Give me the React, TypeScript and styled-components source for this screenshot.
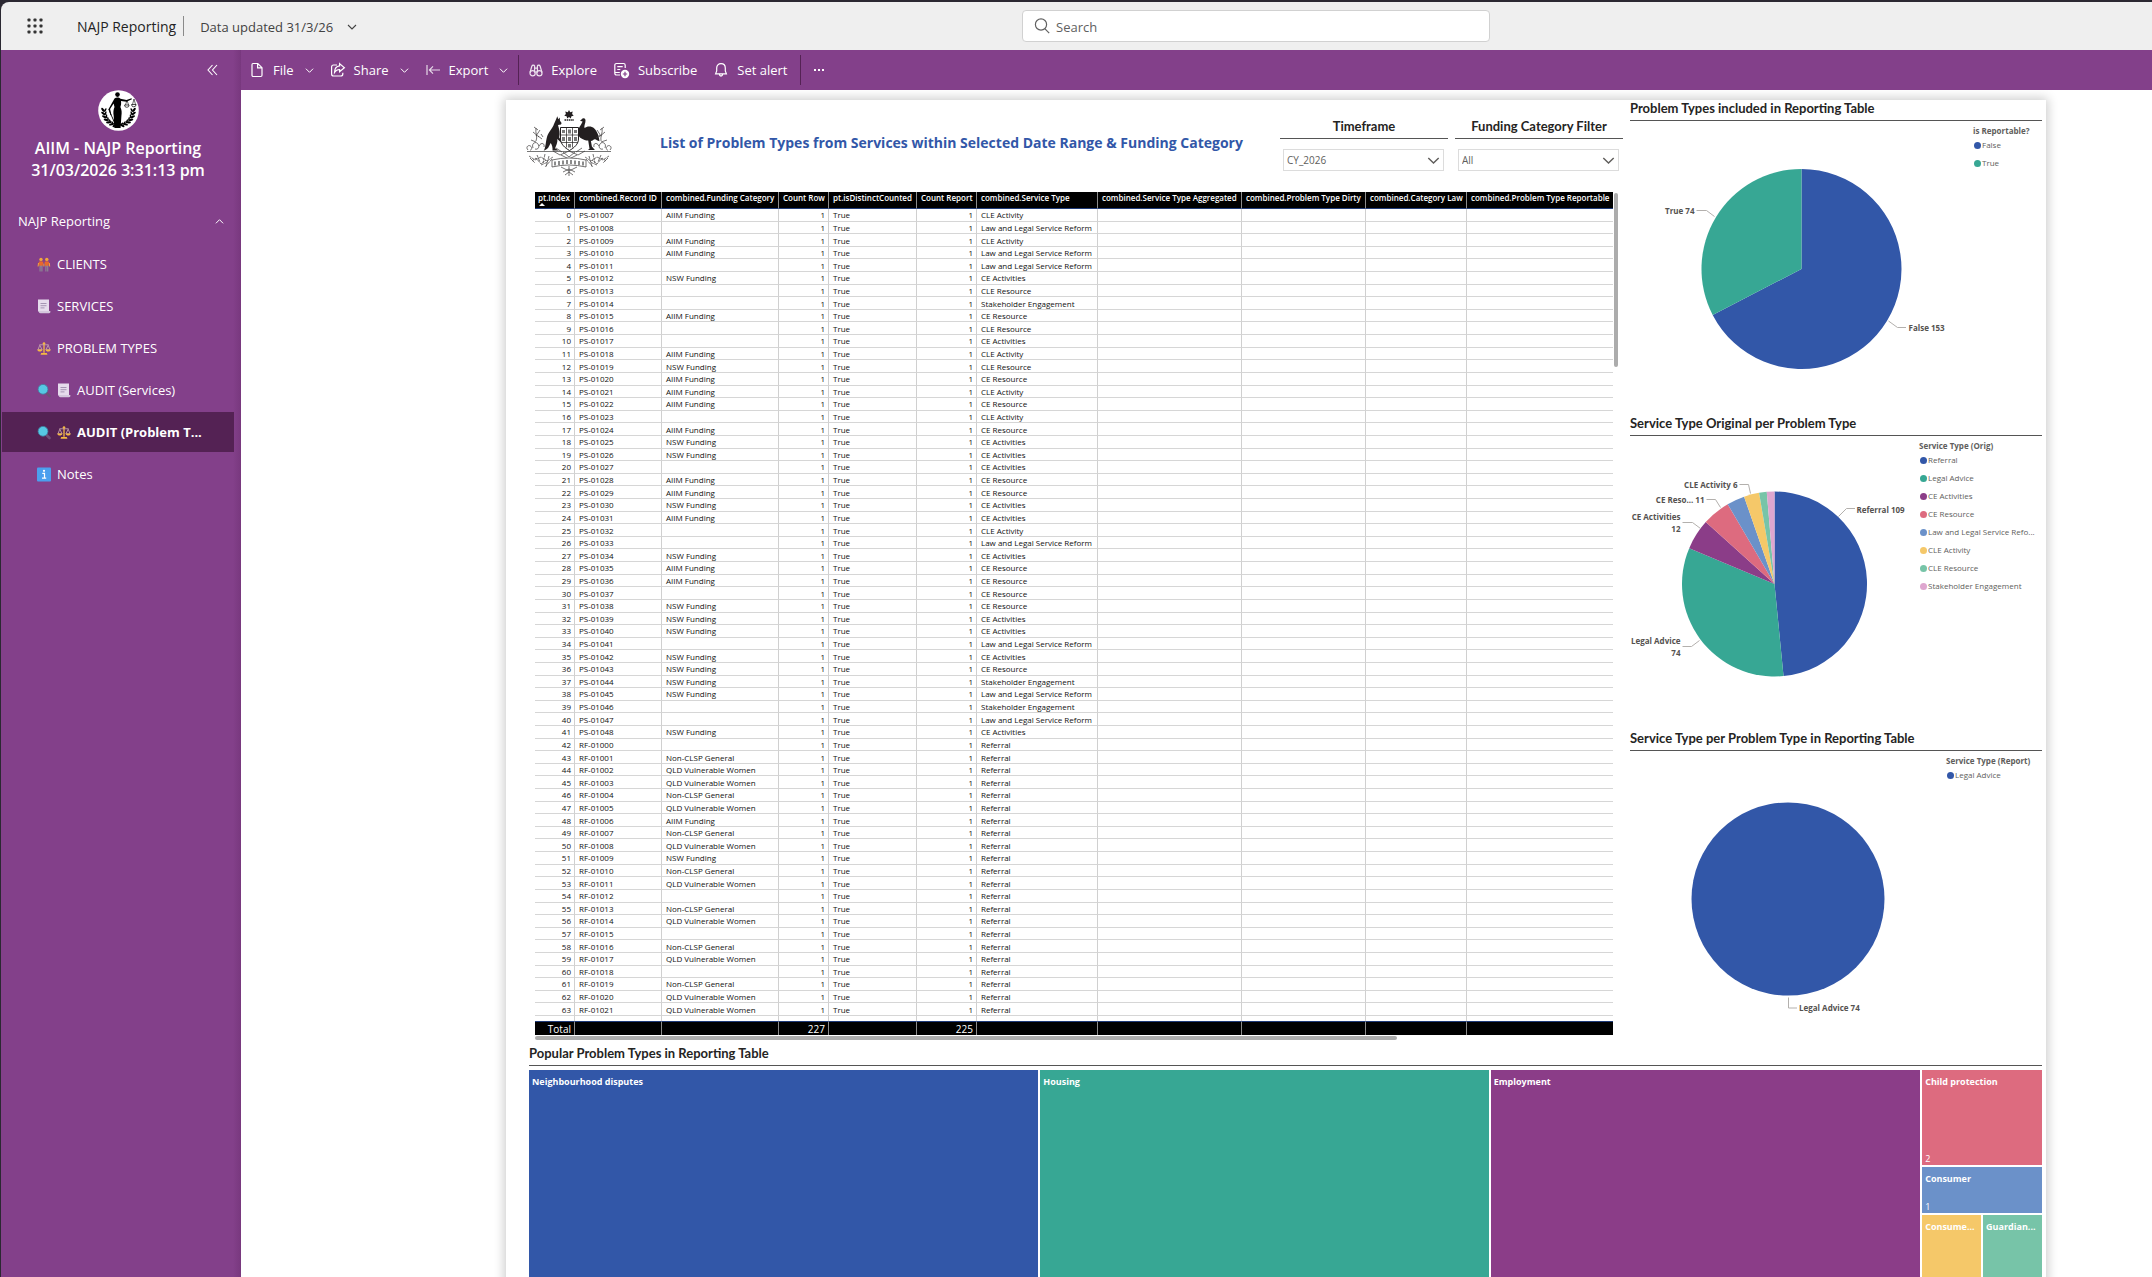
import React from 'react';
import styled, { createGlobalStyle } from 'styled-components';

const palette = {
  blue: '#3257a8',
  green: '#37a794',
  purple: '#8b3d88',
  coral: '#dd6b7f',
  sky: '#6b91c9',
  yellow: '#f5c869',
  mint: '#77c4a8',
  pink: '#dea6cf',
  brand: '#83408a',
  brandDark: '#542254',
};

const uiFont = `'Open Sans', 'Noto Sans', sans-serif`;
const reportFont = `Lato, 'Open Sans', sans-serif`;

const GlobalStyle = createGlobalStyle`
  *, *::before, *::after { box-sizing: border-box; }
  html, body, #root { height: 100%; }
  body { margin: 0; overflow: hidden; background: #2b2832; font-family: ${uiFont}; color: #252423; }
  button, input, select { font: inherit; color: inherit; }
  h1, h2, h3, p, ul, dl, dd { margin: 0; padding: 0; }
  ul { list-style: none; }
  a { color: inherit; text-decoration: none; }
`;

/* ---------- shell ---------- */

const Shell = styled.div`
  height: 100%;
  padding: 2px 0 0 1px;
  display: flex;
  flex-direction: column;
`;

const TopBar = styled.header`
  flex: none;
  height: 48px;
  display: grid;
  grid-template-columns: 1fr 468px minmax(0, 662px);
  align-items: center;
  background: #efefef;
  border-top-left-radius: 8px;
`;

const TopLeft = styled.div`
  display: flex;
  align-items: center;
  padding-left: 18px;
`;

const PlainButton = styled.button`
  display: inline-flex;
  align-items: center;
  padding: 0;
  border: 0;
  background: none;
  cursor: pointer;
`;

const LauncherButton = styled(PlainButton)`
  width: 32px;
  height: 32px;
  justify-content: center;
  color: #333;
`;

const Workspace = styled.a`
  margin-left: 26px;
  padding-top: 2px;
  font-size: 14px;
  line-height: 20px;
  color: #242424;
  white-space: nowrap;
`;

const TopDivider = styled.span`
  width: 1px;
  height: 20px;
  margin: 0 16px 0 7px;
  background: #8a8a8a;
`;

const UpdatedButton = styled(PlainButton)`
  gap: 14px;
  padding-top: 2px;
  font-size: 13px;
  line-height: 20px;
  color: #424242;
  white-space: nowrap;
`;

const SearchBox = styled.label`
  display: flex;
  align-items: center;
  gap: 6px;
  height: 32px;
  padding: 0 11px;
  border: 1px solid #d1d1d1;
  border-radius: 4px;
  background: #fff;
  color: #616161;
`;

const SearchInput = styled.input`
  flex: 1;
  min-width: 0;
  border: 0;
  padding: 2px 0 0;
  outline: 0;
  background: none;
  font-size: 13px;
  line-height: 20px;
  &::placeholder { color: #616161; opacity: 1; }
`;

const Body = styled.div`
  flex: 1;
  min-height: 0;
  display: flex;
`;

/* ---------- sidebar ---------- */

const Sidebar = styled.aside`
  flex: none;
  width: 240px;
  padding: 12px 7px 0 1px;
  display: flex;
  flex-direction: column;
  background: linear-gradient(90deg, ${palette.brand} 232px, #78387e 240px);
  color: #fff;
`;

const CollapseButton = styled(PlainButton)`
  align-self: flex-end;
  width: 32px;
  height: 16px;
  margin-right: 6px;
  justify-content: center;
`;

const AppHead = styled.div`
  display: flex;
  flex-direction: column;
  align-items: center;
  padding-top: 12px;
  padding-bottom: 30px;
`;

const AppName = styled.h1`
  margin-top: 6px;
  font-size: 16px;
  font-weight: 600;
  line-height: 22px;
  text-align: center;
`;

const SectionButton = styled(PlainButton)`
  justify-content: space-between;
  height: 20px;
  padding: 0 10px 0 16px;
  font-size: 13px;
  line-height: 20px;
`;

const NavList = styled.ul`
  display: flex;
  flex-direction: column;
  gap: 2px;
  padding-top: 13px;
`;

const NavLink = styled.a<{ $active?: boolean }>`
  display: flex;
  align-items: center;
  gap: 6px;
  height: 40px;
  padding: 0 28px 0 35px;
  font-size: 13px;
  font-weight: ${(p) => (p.$active ? 700 : 400)};
  line-height: 20px;
  white-space: nowrap;
  background: ${(p) => (p.$active ? palette.brandDark : 'transparent')};
`;

const NavText = styled.span``;

/* ---------- toolbar ---------- */

const MainColumn = styled.div`
  flex: 1;
  min-width: 0;
  display: flex;
  flex-direction: column;
`;

const Toolbar = styled.div`
  flex: none;
  display: flex;
  align-items: center;
  gap: 16px;
  height: 40px;
  padding-left: 8px;
  background: ${palette.brand};
  color: #fff;
`;

const ToolButton = styled(PlainButton)`
  gap: 8px;
  height: 32px;
  font-size: 13px;
  line-height: 20px;
  white-space: nowrap;
  & > svg:last-child:not(:first-child) { margin-left: 3px; }
`;

const ToolDivider = styled.span<{ $tight?: boolean }>`
  width: 1px;
  height: 30px;
  margin: 0 ${(p) => (p.$tight ? -6 : -4)}px;
  background: #542254;
`;

/* ---------- report page ---------- */

const Stage = styled.main`
  flex: 1;
  min-height: 0;
  overflow: hidden;
  padding: 10px 106px 0 265px;
  background: #fff;
`;

const ReportPage = styled.article`
  min-height: 1400px;
  padding: 1px 4px 0 20px;
  background: #fff;
  box-shadow: 0 0 10px 2px rgba(0, 0, 0, 0.2);
  font-family: ${reportFont};
`;

const UpperGrid = styled.div`
  display: grid;
  grid-template-columns: minmax(0, 1fr) 412px;
  gap: 7px;
  height: 942px;
`;

const LeftColumn = styled.section`
  display: flex;
  flex-direction: column;
  min-width: 0;
`;

const ReportHead = styled.div`
  display: flex;
  align-items: flex-start;
  height: 91px;
`;

const CrestBox = styled.div`
  width: 88px;
  padding-top: 9px;
`;

const ReportTitle = styled.h2`
  flex: 1;
  padding: 31px 0 0 46px;
  font-family: ${uiFont};
  font-size: 14px;
  font-weight: 700;
  line-height: 22px;
  color: ${palette.blue};
  white-space: nowrap;
`;

const Slicers = styled.div`
  display: flex;
  gap: 7px;
  padding-top: 14px;
`;

const Slicer = styled.label`
  display: flex;
  flex-direction: column;
  width: 168px;
`;

const SlicerTitle = styled.span`
  height: 24px;
  font-size: 13px;
  font-weight: 700;
  line-height: 22px;
  text-align: center;
  border-bottom: 1px solid #555;
`;

const SelectWrap = styled.span`
  position: relative;
  display: block;
  margin: 10px 4px 0 3px;
  color: #605e5c;
`;

const SlicerSelect = styled.select`
  display: block;
  width: 100%;
  height: 22px;
  padding: 0 24px 0 3px;
  appearance: none;
  border: 1px solid #dcdcdc;
  border-radius: 0;
  background: #fff;
  font-family: ${uiFont};
  font-size: 10px;
  line-height: 20px;
`;

const SelectChevron = styled.span`
  position: absolute;
  right: 4px;
  top: 0;
  height: 22px;
  display: flex;
  align-items: center;
  pointer-events: none;
`;

/* ---------- data table ---------- */

const TableBlock = styled.div`
  display: grid;
  grid-template-columns: minmax(0, 1fr) 6px;
  row-gap: 1px;
  padding: 0 4px 0 9px;
`;

const TableArea = styled.div`
  min-width: 0;
  font-family: ${uiFont};
  font-size: 8px;
  line-height: 11px;
`;

const TableClip = styled.div`
  height: 829px;
  overflow: hidden;
`;

const DataTable = styled.table<{ $height: number }>`
  width: 100%;
  height: ${(p) => p.$height}px;
  table-layout: fixed;
  border-collapse: separate;
  border-spacing: 0;
`;

const HeadCell = styled.th`
  height: 17px;
  padding: 0 0 4px 4px;
  background: #000;
  color: #fff;
  border-right: 1px solid #8c8c8c;
  border-bottom: 1px solid #1e3a78;
  font-weight: 600;
  text-align: left;
  vertical-align: top;
  white-space: nowrap;
  &:first-child { padding-left: 3px; }
  &:last-child { border-right: 0; }
`;

const SortMark = styled.span`
  position: absolute;
  display: block;
  margin-left: 1px;
  border: 3px solid transparent;
  border-top: 0;
  border-bottom-color: #fff;
`;

const Cell = styled.td<{ $num?: boolean }>`
  padding: 0 3px 0 4px;
  color: #111;
  font-weight: 500;
  border-right: 1px solid #d0d0d0;
  border-bottom: 1px solid #d6d6d6;
  text-align: ${(p) => (p.$num ? 'right' : 'left')};
  white-space: nowrap;
  &:last-child { border-right: 0; }
`;

const TotalCell = styled.td`
  height: 14px;
  padding: 0 3px 0 4px;
  background: #000;
  color: #fff;
  border-right: 1px solid #8c8c8c;
  border-top: 1px solid #1e3a78;
  font-size: 10px;
  line-height: 12px;
  text-align: right;
  &:last-child { border-right: 0; }
`;

const VerticalTrack = styled.div`
  padding: 1px 0 0 1px;
  &::before { content: ''; display: block; width: 4px; height: 174px; border-radius: 2px; background: #acacac; }
`;

const HorizontalTrack = styled.div`
  grid-column: 1;
  &::before { content: ''; display: block; width: 80%; height: 4px; border-radius: 2px; background: #acacac; }
`;

/* ---------- charts ---------- */

const RightColumn = styled.section`
  display: flex;
  flex-direction: column;
`;

const ChartPanel = styled.section`
  height: 315px;
`;

const PanelTitle = styled.h3`
  height: 20px;
  font-size: 13px;
  font-weight: 700;
  line-height: 14px;
  border-bottom: 1px solid #555;
  white-space: nowrap;
`;

const ChartRow = styled.div`
  display: flex;
`;

const ChartSvg = styled.svg`
  flex: 1;
  min-width: 0;
  height: 296px;
  overflow: visible;
`;

const Legend = styled.div<{ $width: number }>`
  width: ${(p) => p.$width}px;
  padding-top: 4px;
  font-family: ${uiFont};
  font-size: 8px;
  line-height: 12px;
  color: #605e5c;
`;

const LegendTitle = styled.p`
  font-weight: 700;
`;

const LegendList = styled.ul`
  display: flex;
  flex-direction: column;
  gap: 6px;
  padding: 2px 0 0 1px;
  font-weight: 500;
`;

const LegendItem = styled.li`
  display: flex;
  align-items: center;
  gap: 1px;
  white-space: nowrap;
`;

const Dot = styled.i<{ $color: string }>`
  width: 7px;
  height: 7px;
  border-radius: 50%;
  background: ${(p) => p.$color};
`;

/* ---------- treemap ---------- */

const TreeTitle = styled(PanelTitle)`
  height: 23px;
  line-height: 20px;
`;

const TreeSection = styled.section`
  padding-left: 3px;
`;

const TreeMap = styled.ul`
  display: grid;
  grid-template-columns: 510fr 449fr 430fr 59fr 59fr;
  grid-template-rows: 95px 46px 125px;
  gap: 2px;
  margin-top: 4px;
  color: #fff;
  font-family: ${uiFont};
`;

const Tile = styled.li<{ $color: string; $area: string }>`
  grid-area: ${(p) => p.$area};
  display: flex;
  flex-direction: column;
  justify-content: space-between;
  min-width: 0;
  padding: 5px 0 0 3px;
  background: ${(p) => p.$color};
  font-size: 9px;
  line-height: 13px;
`;

const TileName = styled.strong`
  overflow: hidden;
  white-space: nowrap;
`;

/* ---------- icons ---------- */

const Chevron = ({ size = 9, up = false }: { size?: number; up?: boolean }) => (
  <svg width={size} height={size} viewBox="0 0 10 10" fill="none" stroke="currentColor" strokeWidth="1.1" aria-hidden="true">
    <path d={up ? 'M1 7l4-4 4 4' : 'M1 3l4 4 4-4'} />
  </svg>
);

const WaffleIcon = () => (
  <svg width="16" height="16" viewBox="0 0 16 16" fill="currentColor" aria-hidden="true">
    {[1, 7, 13].map((y) => [1, 7, 13].map((x) => <rect key={`${x}-${y}`} x={x - 0.5} y={y - 0.5} width="3" height="3" rx="0.8" />))}
  </svg>
);

const SearchIcon = () => (
  <svg width="16" height="16" viewBox="0 0 16 16" fill="none" stroke="currentColor" strokeWidth="1.2" aria-hidden="true">
    <circle cx="7" cy="6.5" r="5.6" />
    <path d="M11 10.8l4.2 4.4" />
  </svg>
);

const CollapseIcon = () => (
  <svg width="11" height="12" viewBox="0 0 11 12" fill="none" stroke="currentColor" strokeWidth="1.1" aria-hidden="true">
    <path d="M5.5 1L1 6l4.5 5M10 1L5.5 6l4.5 5" />
  </svg>
);

const toolIcon = { fill: 'none', stroke: 'currentColor', strokeWidth: 1.2, 'aria-hidden': true } as const;

const FileIcon = () => (
  <svg width="16" height="16" viewBox="0 0 16 16" {...toolIcon}>
    <path d="M4 1.5h4.8L13 5.7v7.6c0 .7-.5 1.2-1.2 1.2H4.2c-.7 0-1.2-.5-1.2-1.2V2.7c0-.7.5-1.2 1-1.2zM8.6 1.6v4.2H13" />
  </svg>
);

const ShareIcon = () => (
  <svg width="16" height="16" viewBox="0 0 16 16" {...toolIcon}>
    <path d="M7 3H3.6C2.4 3 1.6 3.8 1.6 5v7c0 1.2.8 2 2 2h7.2c1.2 0 2-.8 2-2v-1.2" />
    <path d="M9.6 1.6L14.4 5.7 9.6 9.8V7.5C7.3 7.5 5.7 8.4 4.5 10.4 4.6 6.8 6.5 4.2 9.6 3.9z" />
  </svg>
);

const ExportIcon = () => (
  <svg width="16" height="16" viewBox="0 0 16 16" {...toolIcon} opacity="0.8">
    <path d="M2 3v10M15 8H4.5M8 4.4L4.4 8 8 11.6" />
  </svg>
);

const ExploreIcon = () => (
  <svg width="14" height="16" viewBox="1 0 14 16" {...toolIcon} opacity="0.85">
    <circle cx="4.6" cy="11.2" r="2.6" />
    <circle cx="11.4" cy="11.2" r="2.6" />
    <path d="M2 10.5L3.9 4c.3-1.2 2.4-1.2 2.7 0V10.5M14 10.5L12.100 4c-.3-1.200-2.400-1.200-2.700 0V10.500M6.600 6.200h2.800M7.200 10h1.600" />
  </svg>
);

const SubscribeIcon = () => (
  <svg width="17" height="17" viewBox="0 0 17 17" {...toolIcon}>
    <path d="M7 13H3.5c-1 0-1.7-.7-1.7-1.7V3.2c0-1 .7-1.7 1.7-1.7h7c1 0 1.7.7 1.7 1.7V6M4.3 4.6h5.4M4.3 7.5h3M1.8 10.5h5" />
    <circle cx="12" cy="12" r="4.2" fill="#fff" stroke="none" />
    <path d="M12 9.8v4.4M9.8 12h4.4" stroke={palette.brand} />
  </svg>
);

const BellIcon = () => (
  <svg width="16" height="16" viewBox="0 0 16 16" {...toolIcon}>
    <path d="M8 1.6c-2.6 0-4.3 1.9-4.3 4.4v3L2.6 11.8h10.8L12.3 9V6c0-2.5-1.7-4.4-4.3-4.4zM6.3 12.2c.2 1.3.9 1.9 1.7 1.9s1.5-.6 1.7-1.9" />
  </svg>
);

const MoreIcon = () => (
  <svg width="14" height="4" viewBox="0 0 14 4" fill="currentColor" aria-hidden="true">
    <rect x="1" y="1" width="2" height="2" /><rect x="5" y="1" width="2" height="2" /><rect x="9" y="1" width="2" height="2" />
  </svg>
);

const ClientsIcon = () => (
  <svg width="14" height="15" viewBox="0 0 14 15" aria-hidden="true">
    {[4, 9.8].map((x) => (
      <g key={x}>
        <path d={`M${x - 1.5} 8h3v6.500h-1.200v-5h-.6v5h-1.200z`} fill="#8d8594" />
        <path d={`M${x - 2.3} 4.800q2.300-1.200 4.600 0l-.6 4h-3.400z`} fill="#e8672c" />
        <circle cx={x} cy="2.400" r="1.700" fill="#f2a83c" />
      </g>
    ))}
    <path d="M1.500 6l-.4 3.500M12.300 6l.4 3.500M6.900 6.500v3" stroke="#f2a83c" />
  </svg>
);

const PageIcon = () => (
  <svg width="14" height="15" viewBox="0 0 14 15" aria-hidden="true">
    <path d="M1 .5h11v12.500H2.500L1 12z" fill="#e6dcec" />
    <path d="M2.500 12h10.800c.3 1.300-.3 2.300-1.300 2.300H3.500C2 14 1.500 13 1.300 11.500z" fill="#d4c8dd" />
    <path d="M3.500 4.500h6M3.500 6.700h6M3.500 8.900h4" stroke="#a595b3" strokeWidth="1" />
  </svg>
);

const ScalesIcon = () => (
  <svg width="14" height="15" viewBox="0 0 15 15" fill="none" aria-hidden="true">
    <path d="M7.500 2v10" stroke="#f5b942" strokeWidth="1.400" />
    <path d="M2.500 3.500h10M3 4L1 9h4.500zM12 4l-2.500 5H14z" stroke="#c9a7b0" strokeWidth=".9" />
    <path d="M.3 8.500h5.400c-.2 1.500-1.200 2.300-2.700 2.300S.5 10 .3 8.500zM9.300 8.500h5.400c-.2 1.500-1.200 2.300-2.700 2.300S9.500 10 9.300 8.500zM4.500 12.300h6l.7 2H3.800z" fill="#f5b942" />
    <circle cx="7.500" cy="2" r="1.300" fill="#f5b942" />
  </svg>
);

const LensIcon = () => (
  <svg width="14" height="15" viewBox="0 0 14 15" fill="none" aria-hidden="true">
    <path d="M9.500 10l3 3" stroke="#6e5078" strokeWidth="2.600" strokeLinecap="round" />
    <circle cx="6" cy="6.300" r="4.900" fill="#56c8e4" stroke="#3f7fa0" strokeWidth=".8" />
  </svg>
);

const InfoIcon = () => (
  <svg width="14" height="15" viewBox="0 0 14 15" aria-hidden="true">
    <rect y=".5" width="14" height="14" rx="1" fill="#4b9fee" />
    <circle cx="7" cy="3.800" r="1.100" fill="#fff" />
    <path d="M5.300 6.300h2.200v5M5 11.200h4.200" stroke="#fff" strokeWidth="1.200" fill="none" />
  </svg>
);

const leaves = [0, 1, 2, 3, 4, 5, 6];

const JusticeLogo = () => (
  <svg width="41" height="41" viewBox="0 0 41 41" role="img" aria-label="AIIM">
    <circle cx="20.500" cy="20.500" r="20.300" fill="#fff" />
    <g fill="#000">
      <circle cx="19.500" cy="4.600" r="2.300" />
      <path d="M16.500 8.500c1.500-1.300 4.600-1.300 6 .2l6 1.200 5-1.600.4 1-5.400 2.400-5.500-.6c.3 2.600.1 4.200-.6 5.800 1.400 3 1.500 5.600 1 9l-.8 12h-6.200l-.7-12c-.6-3.300-.3-6 .8-8.800l-.9-3.600-3.500 5.600 1.300 6-.9.2-1.900-6.300z" />
      <path d="M11 19l7.500 17-.8.4L10.300 19.300z" />
    </g>
    <path d="M29 10l-1.500 5M29 10l1.500 5M36 9l-1.500 5.500M36 9l1.500 5.500" stroke="#000" strokeWidth=".6" fill="none" />
    <path d="M26.500 15a2.300 2.300 0 004.600 0zM33.500 14.500a2.300 2.300 0 004.600 0z" fill="none" stroke="#000" strokeWidth=".7" />
    {leaves.map((i) => {
      const a = ((182 - i * 13) * Math.PI) / 180;
      const x = 15.5 * Math.cos(a);
      const y = 15.5 * Math.sin(a);
      return (
        <g key={i}>
          <ellipse cx={20.5 + x} cy={20.5 + y} rx="2.500" ry="1.100" transform={`rotate(${50 - i * 13} ${20.5 + x} ${20.5 + y})`} />
          <ellipse cx={20.5 + x * 0.85} cy={20.5 + y * 0.9} rx="2" ry=".8" transform={`rotate(${120 - i * 13} ${20.5 + x * 0.85} ${20.5 + y * 0.9})`} />
          <ellipse cx={20.5 - x} cy={20.5 + y} rx="2.500" ry="1.100" transform={`rotate(${-50 + i * 13} ${20.5 - x} ${20.5 + y})`} />
          <ellipse cx={20.5 - x * 0.85} cy={20.5 + y * 0.9} rx="2" ry=".8" transform={`rotate(${-120 + i * 13} ${20.5 - x * 0.85} ${20.5 + y * 0.9})`} />
        </g>
      );
    })}
  </svg>
);

const Crest = () => (
  <svg width="86" height="66" viewBox="1 0 86 66" role="img" aria-label="Australian coat of arms">
    <path d="M44 0l1.200 2.200 2.500-.6-.6 2.400 1.600 1.700-2.300.6-.6 2.300-1.800-1.500-1.800 1.500-.6-2.300-2.300-.6 1.600-1.700-.6-2.400 2.500.6z" fill="#231f20" />
    <path d="M39.500 10h9.500" stroke="#231f20" strokeWidth="1.600" strokeDasharray="1.600 .6" />
    <g fill="#231f20">
      <path d="M31 9.500l1.300-3.300 1 3 1.400-1.700.3 3.200 1.600 2.400-.6 1.300-3 .5c1.300 4.200 2.300 8.300 1.200 12.500l2.200 3.300-.6 1.500-3.500-3.300c.6 3.600-1.300 6.500-2.200 9.300l3.700 2.300H27.500c.3-3.300-.6-5.500-1.800-7.500-2 3.600-2.200 6.200-7 7.700 2.200-3.300 1.900-9.300 3.500-14.500 1.300-4.400 5.300-7.500 6.800-12.300z" />
      <path d="M56.500 9.500c1.300-1.800 3.600-1.500 4 .6.3 3-1.800 5.600-1 8 2.500-2 7-2.200 9.800.4 3.300 3 4.600 8.400 5.200 12.800-2-.3-3.300-1.800-4.600-2-1.600.2-2.300 1.600-4 1.600l1 5.600 3 3.600h-7l1.600-1.300-1.300-8.200c-5-.6-9.300-2.600-10.400-7.200-1-4.600 3.600-8.400 4.800-12l-2.600-.6z" />
    </g>
    <path d="M35.500 17.500h18V29c0 5-4.500 9-9 11.500-4.500-2.500-9-6.500-9-11.500z" fill="#fff" stroke="#231f20" strokeWidth="1" />
    <path d="M35.500 25h18M41.500 17.500v20M47.500 17.500v20M36 32.500h17" stroke="#231f20" strokeWidth=".7" />
    <path d="M37 20h3v3h-3zM43 19.500h3v4h-3zM49 20h3v3h-3zM37 27h3v4h-3zM43 27h3v4h-3zM49 27h3v4h-3zM43 34h3v3.500h-3z" fill="#777" />
    <g fill="none" stroke="#3a3637" strokeWidth=".7">
      <path d="M2 41.500h84" strokeWidth="1.200" stroke="#777" />
      <path d="M3 40c-3-3 1-6 3-3.500s-1 4-1 4M8 38c-2-5 3-7 5-4s0 6-3 5M14 36c2-4 6-3 5 1M11 31c2-4-1-8 0-13M8 22l6 5M15 20l-4 6M17 29l-4-3M9 17l4 3M16 24l2 3M6 30l5 2" />
      <path d="M85 40c3-3-1-6-3-3.500s1 4 1 4M80 38c2-5-3-7-5-4s0 6 3 5M74 36c-2-4-6-3-5 1M76 31c-1-4 2-8 1-13M80 22l-6 5M72 20l4 6M71 28l4-3M79 17l-4 3M82 30l-6 2" />
      <path d="M28 41l7 4 9-4 9 4 7-4M31 38l6 4M57 38l-6 4M36 45l8 4 8-4M38 42l6 5 6-5" />
      <path d="M4 46l6 4 6-3 6 4 6-4M7 51l4-3 5 6 5-4M12 45l3 7M20 44l-2 9M24 46l-3 11M27 49l-7 8M5 48l5 5M16 55l7-3" strokeDasharray="3 .6" />
      <path d="M84 46l-6 4-6-3-6 4-6-4M81 51l-4-3-5 6-5-4M76 45l-3 7M68 44l2 9M64 46l3 11M61 49l7 8M83 48l-5 5M72 55l-7-3" strokeDasharray="3 .6" />
      <path d="M27 50q17-4 34 0v7q-17-4-34 0z" fill="#fff" />
      <path d="M30 51.500v4M34 51v4M38 50.500v4M42 50v4M46 50v4M50 50.500v4M54 51v4M58 51.500v4" strokeWidth="1.500" stroke="#666" />
      <path d="M44 56v10M36 57l8 4 8-4M38 62l6-3 6 3M40 65l4-3 4 3" />
    </g>
  </svg>
);

/* ---------- data ---------- */

const columns: [string, number][] = [
  ['pt.Index', 40], ['combined.Record ID', 87], ['combined.Funding Category', 117], ['Count Row', 50],
  ['pt.isDistinctCounted', 88], ['Count Report', 60], ['combined.Service Type', 121],
  ['combined.Service Type Aggregated', 144], ['combined.Problem Type Dirty', 124],
  ['combined.Category Law', 101], ['combined.Problem Type Reportable', 146],
];
const columnTotal = columns.reduce((sum, c) => sum + c[1], 0);

const fundingNames: Record<string, string> = {
  A: 'AIIM Funding', N: 'NSW Funding', G: 'Non-CLSP General', Q: 'QLD Vulnerable Women', '-': '',
};
const serviceNames: Record<string, string> = {
  a: 'CLE Activity', l: 'Law and Legal Service Reform', e: 'CE Activities', r: 'CLE Resource',
  s: 'Stakeholder Engagement', c: 'CE Resource', f: 'Referral',
};

// One letter per record, in blocks of ten.
const fundingCodes = [
  'A-AA-N--A-', '-ANAAA-ANN', '-AANA--NAA', '-NNN-NNNN-', '-N-GQQGQAG', 'QNGQ-GQ-GQ', '-GQQG',
].join('');
const serviceCodes = [
  'alallerscr', 'earcacacee', 'ecceealecc', 'cceelecsls', 'leffffffff', 'ffffffffff', 'fffff',
].join('');

const rows = Array.from({ length: 65 }, (_, i) => ({
  index: i,
  record: i < 42 ? `PS-0${1007 + i}` : `RF-0${1000 + i - 42}`,
  funding: fundingNames[fundingCodes[i]],
  service: serviceNames[serviceCodes[i]],
}));

const navItems = [
  { icons: [ClientsIcon], text: 'CLIENTS' },
  { icons: [PageIcon], text: 'SERVICES' },
  { icons: [ScalesIcon], text: 'PROBLEM TYPES' },
  { icons: [LensIcon, PageIcon], text: 'AUDIT (Services)' },
  { icons: [LensIcon, ScalesIcon], text: 'AUDIT (Problem T...', active: true },
  { icons: [InfoIcon], text: 'Notes' },
];

type Slice = { value: number; color: string };
type Label = { lines: string[]; x: number; y: number; end?: boolean; leader: string };

function slicePath(start: number, end: number, r: number) {
  const at = (t: number) => `${(r * Math.sin(t * 2 * Math.PI)).toFixed(2)} ${(-r * Math.cos(t * 2 * Math.PI)).toFixed(2)}`;
  return `M0 0L${at(start)}A${r} ${r} 0 ${end - start > 0.5 ? 1 : 0} 1 ${at(end)}Z`;
}

function Pie({ name, slices, radius, labels }: { name: string; slices: Slice[]; radius: number; labels: Label[] }) {
  const total = slices.reduce((s, x) => s + x.value, 0);
  let acc = 0;
  return (
    <ChartSvg viewBox="-140 -148 280 296" role="img" aria-label={name}>
      {slices.length === 1 ? (
        <circle r={radius} fill={slices[0].color} />
      ) : (
        slices.map((s) => {
          const from = acc / total;
          acc += s.value;
          return <path key={s.color} d={slicePath(from, acc / total, radius)} fill={s.color} />;
        })
      )}
      {labels.map((l) => (
        <g key={l.lines[0]}>
          <path d={l.leader} fill="none" stroke="#b3b0ad" strokeWidth="1" />
          {l.lines.map((line, i) => (
            <text key={line} x={l.x} y={l.y + i * 12} textAnchor={l.end ? 'end' : 'start'} fontFamily="Open Sans, Noto Sans, sans-serif" fontSize="8" fontWeight="700" fill="#555250">
              {line}
            </text>
          ))}
        </g>
      ))}
    </ChartSvg>
  );
}

const panels = [
  {
    title: 'Problem Types included in Reporting Table',
    legendTitle: 'is Reportable?',
    legendWidth: 69,
    radius: 100,
    slices: [{ value: 153, color: palette.blue }, { value: 74, color: palette.green }],
    legend: ['False', 'True'],
    labels: [
      { lines: ['True 74'], x: -107, y: -55, end: true, leader: 'M-105 -58.5h10l8 6' },
      { lines: ['False 153'], x: 107, y: 62, leader: 'M87 52l9 6.5h8.5' },
    ],
  },
  {
    title: 'Service Type Original per Problem Type',
    legendTitle: 'Service Type (Orig)',
    legendWidth: 123,
    radius: 92.5,
    slices: [
      { value: 109, color: palette.blue }, { value: 74, color: palette.green }, { value: 12, color: palette.purple },
      { value: 11, color: palette.coral }, { value: 7, color: palette.sky }, { value: 6, color: palette.yellow },
      { value: 3, color: palette.mint }, { value: 3, color: palette.pink },
    ],
    legend: ['Referral', 'Legal Advice', 'CE Activities', 'CE Resource', 'Law and Legal Service Refo...', 'CLE Activity', 'CLE Resource', 'Stakeholder Engagement'],
    labels: [
      { lines: ['Referral 109'], x: 82, y: -71, leader: 'M64 -67.5l8 -8h8.5' },
      { lines: ['CLE Activity 6'], x: -37, y: -96, end: true, leader: 'M-35 -99.5h9l2 9' },
      { lines: ['CE Reso... 11'], x: -70, y: -81, end: true, leader: 'M-68 -84.5h9l5 8' },
      { lines: ['CE Activities', '12'], x: -94, y: -64, end: true, leader: 'M-92 -61.5h10l8 6' },
      { lines: ['Legal Advice', '74'], x: -94, y: 60, end: true, leader: 'M-92 62.5h9l8 -6' },
    ],
  },
  {
    title: 'Service Type per Problem Type in Reporting Table',
    legendTitle: 'Service Type (Report)',
    legendWidth: 96,
    radius: 96.5,
    slices: [{ value: 74, color: palette.blue }],
    legend: ['Legal Advice'],
    labels: [{ lines: ['Legal Advice 74'], x: 11, y: 112, leader: 'M.5 98.5v10.5h8.5' }],
  },
];

const tiles = [
  { name: 'Neighbourhood disputes', color: palette.blue, area: '1 / 1 / 4 / 2' },
  { name: 'Housing', color: palette.green, area: '1 / 2 / 4 / 3' },
  { name: 'Employment', color: palette.purple, area: '1 / 3 / 4 / 4' },
  { name: 'Child protection', color: palette.coral, area: '1 / 4 / 2 / 6', value: 2 },
  { name: 'Consumer', color: palette.sky, area: '2 / 4 / 3 / 6', value: 1 },
  { name: 'Consume...', color: palette.yellow, area: '3 / 4 / 4 / 5' },
  { name: 'Guardian...', color: palette.mint, area: '3 / 5 / 4 / 6' },
];

const totals = ['Total', '', '', '227', '', '225', '', '', '', '', ''];

const ColumnWidths = () => (
  <colgroup>
    {columns.map(([name, w]) => <col key={name} style={{ width: `${(w / columnTotal) * 100}%` }} />)}
  </colgroup>
);

function ReportTable() {
  return (
    <TableBlock>
      <TableArea>
        <TableClip>
          <DataTable $height={837}>
            <ColumnWidths />
            <thead>
              <tr>
                {columns.map(([name], i) => (
                  <HeadCell key={name} scope="col">{name}{i === 0 && <SortMark />}</HeadCell>
                ))}
              </tr>
            </thead>
            <tbody>
              {rows.map((r) => (
                <tr key={r.index}>
                  <Cell $num>{r.index}</Cell>
                  <Cell>{r.record}</Cell>
                  <Cell>{r.funding}</Cell>
                  <Cell $num>1</Cell>
                  <Cell>True</Cell>
                  <Cell $num>1</Cell>
                  <Cell>{r.service}</Cell>
                  <Cell /><Cell /><Cell /><Cell />
                </tr>
              ))}
            </tbody>
          </DataTable>
        </TableClip>
        <DataTable $height={14}>
          <ColumnWidths />
          <tbody>
            <tr>{totals.map((v, i) => <TotalCell key={i}>{v}</TotalCell>)}</tr>
          </tbody>
        </DataTable>
      </TableArea>
      <VerticalTrack />
      <HorizontalTrack />
    </TableBlock>
  );
}

export default function App() {
  return (
    <>
      <GlobalStyle />
      <Shell>
        <TopBar>
          <TopLeft>
            <LauncherButton aria-label="App launcher"><WaffleIcon /></LauncherButton>
            <Workspace href="#">NAJP Reporting</Workspace>
            <TopDivider />
            <UpdatedButton>Data updated 31/3/26 <Chevron size={10} /></UpdatedButton>
          </TopLeft>
          <SearchBox>
            <SearchIcon />
            <SearchInput type="search" placeholder="Search" aria-label="Search" />
          </SearchBox>
        </TopBar>
        <Body>
          <Sidebar>
            <CollapseButton aria-label="Collapse navigation"><CollapseIcon /></CollapseButton>
            <AppHead>
              <JusticeLogo />
              <AppName>AIIM - NAJP Reporting<br />31/03/2026 3:31:13 pm</AppName>
            </AppHead>
            <SectionButton aria-expanded="true">NAJP Reporting <Chevron up /></SectionButton>
            <nav>
              <NavList>
                {navItems.map((n) => (
                  <li key={n.text}>
                    <NavLink href="#" $active={n.active} aria-current={n.active ? 'page' : undefined}>
                      {n.icons.map((Icon, i) => <Icon key={i} />)}
                      <NavText>{n.text}</NavText>
                    </NavLink>
                  </li>
                ))}
              </NavList>
            </nav>
          </Sidebar>
          <MainColumn>
            <Toolbar role="toolbar">
              <ToolButton><FileIcon />File<Chevron /></ToolButton>
              <ToolButton><ShareIcon />Share<Chevron /></ToolButton>
              <ToolButton><ExportIcon />Export<Chevron /></ToolButton>
              <ToolDivider $tight />
              <ToolButton><ExploreIcon />Explore</ToolButton>
              <ToolButton><SubscribeIcon />Subscribe</ToolButton>
              <ToolButton><BellIcon />Set alert</ToolButton>
              <ToolDivider />
              <ToolButton aria-label="More options"><MoreIcon /></ToolButton>
            </Toolbar>
            <Stage>
              <ReportPage>
                <UpperGrid>
                  <LeftColumn>
                    <ReportHead>
                      <CrestBox><Crest /></CrestBox>
                      <ReportTitle>List of Problem Types from Services within Selected Date Range &amp; Funding Category</ReportTitle>
                      <Slicers>
                        <Slicer>
                          <SlicerTitle>Timeframe</SlicerTitle>
                          <SelectWrap>
                            <SlicerSelect defaultValue="CY_2026"><option>CY_2026</option></SlicerSelect>
                            <SelectChevron><Chevron size={13} /></SelectChevron>
                          </SelectWrap>
                        </Slicer>
                        <Slicer>
                          <SlicerTitle>Funding Category Filter</SlicerTitle>
                          <SelectWrap>
                            <SlicerSelect defaultValue="All"><option>All</option></SlicerSelect>
                            <SelectChevron><Chevron size={13} /></SelectChevron>
                          </SelectWrap>
                        </Slicer>
                      </Slicers>
                    </ReportHead>
                    <ReportTable />
                  </LeftColumn>
                  <RightColumn>
                    {panels.map((p) => (
                      <ChartPanel key={p.title}>
                        <PanelTitle>{p.title}</PanelTitle>
                        <ChartRow>
                          <Pie name={p.title} slices={p.slices} radius={p.radius} labels={p.labels} />
                          <Legend $width={p.legendWidth}>
                            <LegendTitle>{p.legendTitle}</LegendTitle>
                            <LegendList>
                              {p.legend.map((t, i) => (
                                <LegendItem key={t}><Dot $color={p.slices[i].color} />{t}</LegendItem>
                              ))}
                            </LegendList>
                          </Legend>
                        </ChartRow>
                      </ChartPanel>
                    ))}
                  </RightColumn>
                </UpperGrid>
                <TreeSection>
                  <TreeTitle>Popular Problem Types in Reporting Table</TreeTitle>
                  <TreeMap>
                    {tiles.map((t) => (
                      <Tile key={t.name} $color={t.color} $area={t.area}>
                        <TileName>{t.name}</TileName>
                        {t.value && <span>{t.value}</span>}
                      </Tile>
                    ))}
                  </TreeMap>
                </TreeSection>
              </ReportPage>
            </Stage>
          </MainColumn>
        </Body>
      </Shell>
    </>
  );
}
